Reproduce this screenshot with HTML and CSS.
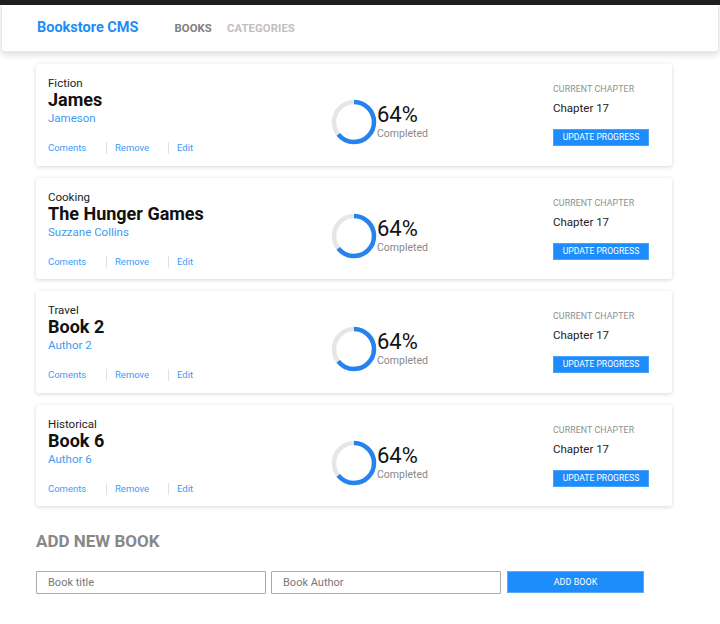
FILE: index.html
```html
<!DOCTYPE html>
<html>
<head>
<meta charset="utf-8">
<link rel="stylesheet" href="styles.css">
</head>
<body>
<div class="topbar"></div>
<header class="header">
  <span class="brand">Bookstore CMS</span>
  <nav class="nav">
    <span class="nav-link active">BOOKS</span>
    <span class="nav-link">CATEGORIES</span>
  </nav>
</header>
<main class="main">
  <ul class="books">
    <li class="card">
      <div class="info">
        <div class="genre">Fiction</div>
        <div class="title">James</div>
        <div class="author">Jameson</div>
        <div class="actions"><span class="act">Coments</span><span class="act">Remove</span><span class="act">Edit</span></div>
      </div>
      <div class="progress">
        <svg class="ring" width="46" height="46" viewBox="0 0 46 46"><circle cx="23" cy="23" r="20" fill="none" stroke="#e6e6e6" stroke-width="4.5"/><circle cx="23" cy="23" r="20" fill="none" stroke="#2583f0" stroke-width="4.5" stroke-dasharray="80.4 125.7" transform="rotate(-90 23 23)"/></svg>
        <div class="pct"><div class="num">64%</div><div class="done">Completed</div></div>
      </div>
      <div class="chapter">
        <div class="cc">CURRENT CHAPTER</div>
        <div class="ch">Chapter 17</div>
        <button class="upd">UPDATE PROGRESS</button>
      </div>
    </li>
    <li class="card">
      <div class="info">
        <div class="genre">Cooking</div>
        <div class="title">The Hunger Games</div>
        <div class="author">Suzzane Collins</div>
        <div class="actions"><span class="act">Coments</span><span class="act">Remove</span><span class="act">Edit</span></div>
      </div>
      <div class="progress">
        <svg class="ring" width="46" height="46" viewBox="0 0 46 46"><circle cx="23" cy="23" r="20" fill="none" stroke="#e6e6e6" stroke-width="4.5"/><circle cx="23" cy="23" r="20" fill="none" stroke="#2583f0" stroke-width="4.5" stroke-dasharray="80.4 125.7" transform="rotate(-90 23 23)"/></svg>
        <div class="pct"><div class="num">64%</div><div class="done">Completed</div></div>
      </div>
      <div class="chapter">
        <div class="cc">CURRENT CHAPTER</div>
        <div class="ch">Chapter 17</div>
        <button class="upd">UPDATE PROGRESS</button>
      </div>
    </li>
    <li class="card">
      <div class="info">
        <div class="genre">Travel</div>
        <div class="title">Book 2</div>
        <div class="author">Author 2</div>
        <div class="actions"><span class="act">Coments</span><span class="act">Remove</span><span class="act">Edit</span></div>
      </div>
      <div class="progress">
        <svg class="ring" width="46" height="46" viewBox="0 0 46 46"><circle cx="23" cy="23" r="20" fill="none" stroke="#e6e6e6" stroke-width="4.5"/><circle cx="23" cy="23" r="20" fill="none" stroke="#2583f0" stroke-width="4.5" stroke-dasharray="80.4 125.7" transform="rotate(-90 23 23)"/></svg>
        <div class="pct"><div class="num">64%</div><div class="done">Completed</div></div>
      </div>
      <div class="chapter">
        <div class="cc">CURRENT CHAPTER</div>
        <div class="ch">Chapter 17</div>
        <button class="upd">UPDATE PROGRESS</button>
      </div>
    </li>
    <li class="card">
      <div class="info">
        <div class="genre">Historical</div>
        <div class="title">Book 6</div>
        <div class="author">Author 6</div>
        <div class="actions"><span class="act">Coments</span><span class="act">Remove</span><span class="act">Edit</span></div>
      </div>
      <div class="progress">
        <svg class="ring" width="46" height="46" viewBox="0 0 46 46"><circle cx="23" cy="23" r="20" fill="none" stroke="#e6e6e6" stroke-width="4.5"/><circle cx="23" cy="23" r="20" fill="none" stroke="#2583f0" stroke-width="4.5" stroke-dasharray="80.4 125.7" transform="rotate(-90 23 23)"/></svg>
        <div class="pct"><div class="num">64%</div><div class="done">Completed</div></div>
      </div>
      <div class="chapter">
        <div class="cc">CURRENT CHAPTER</div>
        <div class="ch">Chapter 17</div>
        <button class="upd">UPDATE PROGRESS</button>
      </div>
    </li>
  </ul>
  <section class="add">
    <h2 class="add-title">ADD NEW BOOK</h2>
    <form class="add-form">
      <input class="field" type="text" placeholder="Book title">
      <input class="field" type="text" placeholder="Book Author">
      <button class="add-btn" type="button">ADD BOOK</button>
    </form>
  </section>
</main>
</body>
</html>
```
FILE: styles.css
```css
* { box-sizing: border-box; }
html, body { margin: 0; padding: 0; background: #fff; }
body { font-family: Roboto, "Liberation Sans", sans-serif; color: #121212; }
.topbar { height: 5px; background: #202020; }
.header {
  height: 47px;
  margin: 0 1px 0 1px;
  background: #fff;
  border: 1px solid #e8e8e8;
  border-top: none;
  border-radius: 0 0 4px 4px;
  box-shadow: 0 3px 6px rgba(0,0,0,0.13);
  display: flex;
  align-items: center;
  padding-left: 35px;
  padding-bottom: 1px;
}
.brand { color: #1e8cf5; font-weight: 700; font-size: 14.5px; }
.nav { display: flex; gap: 15px; margin-left: 36px; padding-top: 1px; }
.nav-link { font-size: 11.3px; font-weight: 700; color: #c4bdbd; letter-spacing: 0.1px; }
.nav-link.active { color: #808080; }
.main { padding: 12px 48px 0 36px; }
.books { list-style: none; margin: 0; padding: 0; display: flex; flex-direction: column; gap: 12px; }
.card {
  height: 101.5px;
  background: #fff;
  border-radius: 3px;
  box-shadow: 0 1px 4px rgba(0,0,0,0.16);
  display: grid;
  grid-template-columns: 283px 222px 1fr;
  padding: 12px 0 0 12px;
}
.genre { font-size: 11.5px; line-height: 14px; color: #222; }
.title { font-size: 18px; line-height: 20px; font-weight: 700; color: #111; }
.author { font-size: 11.5px; line-height: 16px; color: #3c9cf4; }
.actions { display: flex; margin-top: 16px; line-height: 12px; }
.act { font-size: 9.5px; color: #3c9cf4; }
.act + .act { border-left: 1px solid #e0e0e0; }
.act:nth-child(1) { width: 58px; }
.act:nth-child(2) { width: 62px; padding-left: 8px; }
.act:nth-child(3) { padding-left: 8px; }
.progress { display: flex; align-items: flex-start; padding-top: 23px; }
.ring { display: block; margin-top: 0; }
.pct { margin-left: 0; padding-top: 3px; }
.num { font-size: 22px; line-height: 26px; color: #121212; }
.done { font-size: 10.5px; line-height: 12px; color: #8a8a8a; }
.chapter { padding-top: 7px; }
.cc { font-size: 8.8px; line-height: 12px; color: #8f8f8f; letter-spacing: 0.1px; }
.ch { font-size: 11.5px; line-height: 14px; color: #222; margin-top: 6px; }
.upd {
  margin-top: 14px;
  display: block;
  width: 96px; height: 17px;
  padding: 0;
  background: #1e8dfc;
  border: 1px solid #4aa3f8;
  color: #fff;
  font-family: Roboto, "Liberation Sans", sans-serif;
  font-size: 8.6px;
  line-height: 15px;
}
.add { padding-top: 20px; }
.add-title { margin: 0; font-size: 17px; line-height: 30px; font-weight: 700; color: #888; }
.add-form { display: flex; margin-top: 15px; align-items: flex-start; }
.field {
  width: 230px; height: 23px;
  border: 1px solid #a9a9a9;
  border-radius: 1px;
  padding: 0 11px;
  font-family: Roboto, "Liberation Sans", sans-serif;
  font-size: 11px;
  color: #333;
  margin-right: 5px;
}
.field::placeholder { color: #777; }
.field + .field { margin-right: 6px; }
.add-btn {
  width: 137px; height: 22px;
  background: #1e8dfc;
  border: 1px solid #5aaaf7;
  color: #fff;
  font-family: Roboto, "Liberation Sans", sans-serif;
  font-size: 9px;
  padding: 0;
}
```
